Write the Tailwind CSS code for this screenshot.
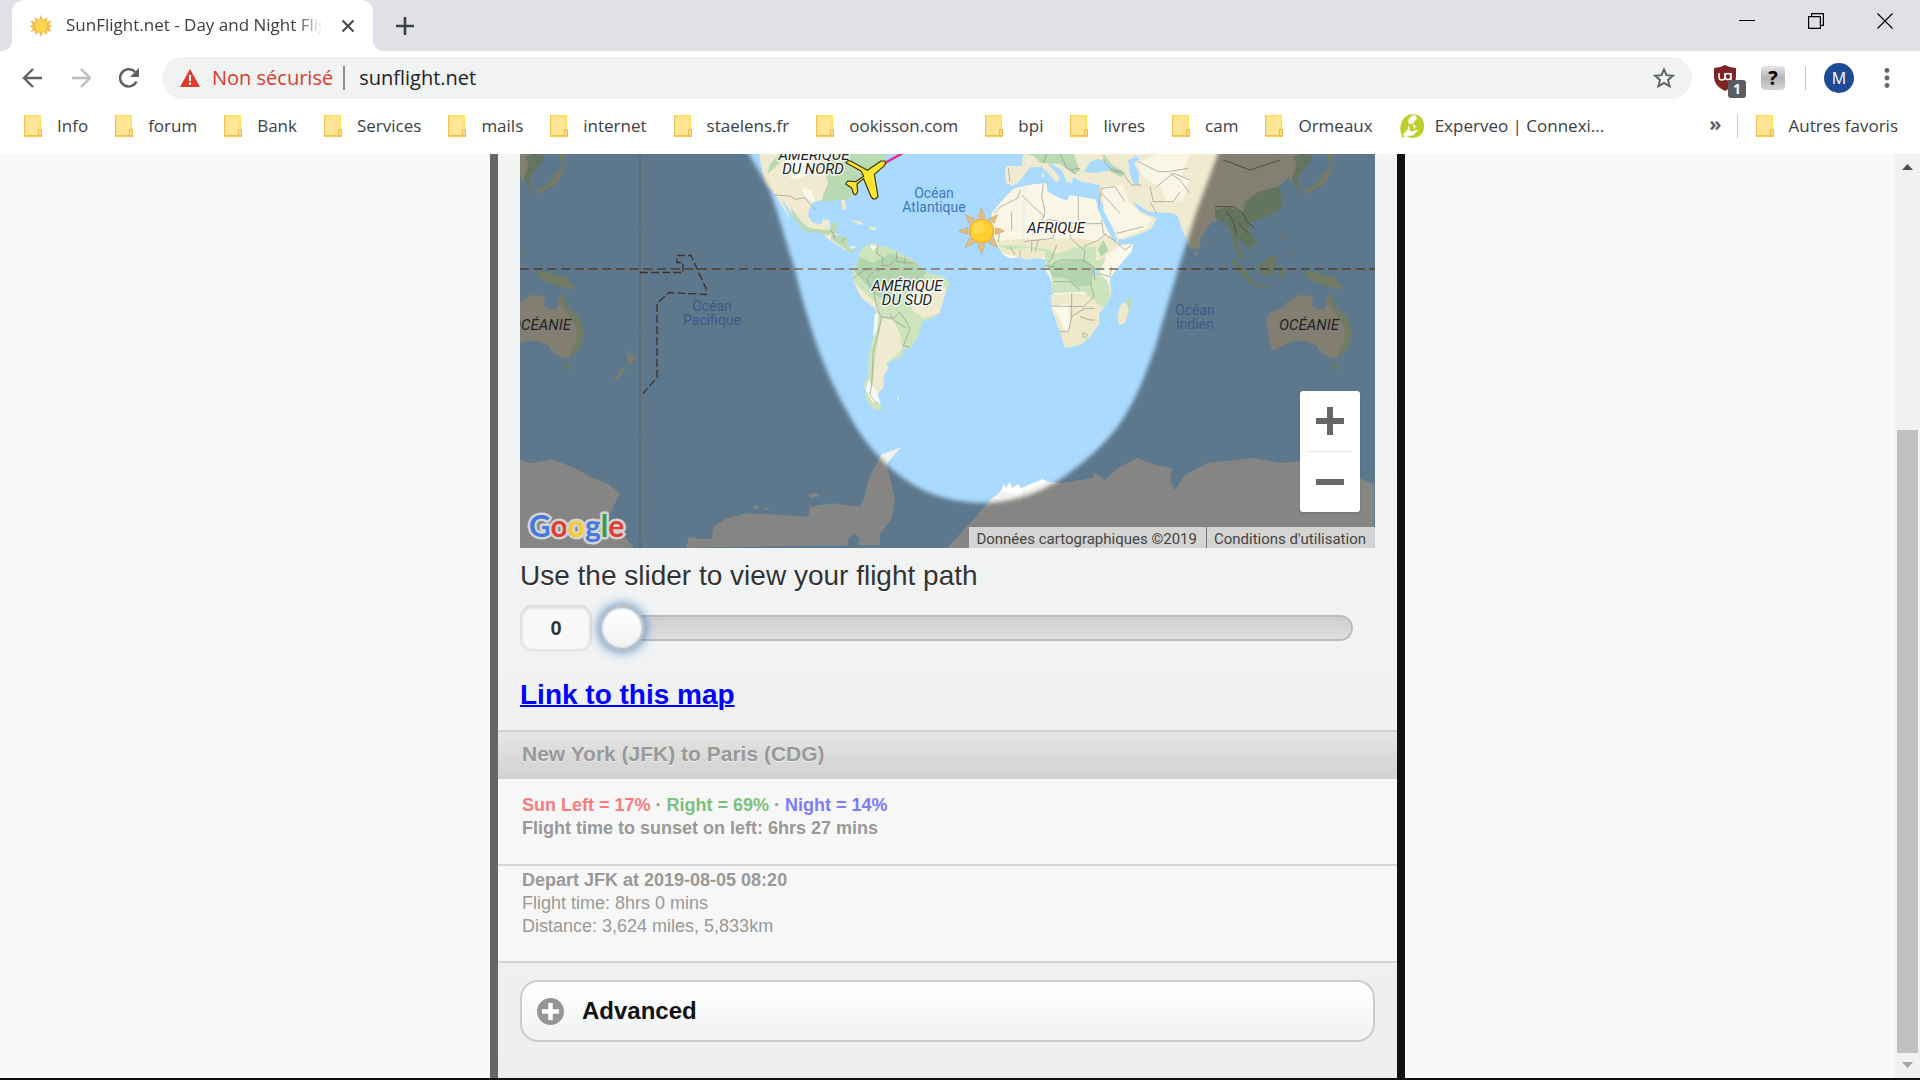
<!DOCTYPE html>
<html lang="fr">
<head>
<meta charset="utf-8">
<title>SunFlight.net - Day and Night Flight Map</title>
<script src="https://cdn.jsdelivr.net/npm/@tailwindcss/browser@4"></script>
</head>
<body class="flex h-screen flex-col overflow-hidden bg-white font-['Open_Sans',sans-serif] text-[#3c4043]">

<svg class="hidden" aria-hidden="true">
  <symbol id="folder" viewBox="0 0 18 22">
    <path d="M0 0h17v14h1v8H0z" fill="#ffdf5a"/>
    <path d="M1 1.500h14.500V20H1z" fill="#ffe596"/>
    <path d="M0 0h1.200v22H0z" fill="#f0c455"/>
    <path d="M0 20.800h18" stroke="#f3c04a" stroke-width="1.500"/>
    <path d="M14.700 21v-6.300h2.600V21z" fill="#ffe9a8" stroke="#e8b23c"/>
  </symbol>
</svg>

<!-- tab strip -->
<header class="flex h-[51px] shrink-0 items-end bg-[#dfe1e6]">
  <div class="h-2.5 w-3 bg-white"><div class="h-full w-full rounded-br-[10px] bg-[#dfe1e6]"></div></div>
  <div class="flex h-full w-[361px] items-center rounded-t-[12px] bg-white pr-[18px] pl-[17px]">
    <svg class="h-6 w-6 shrink-0" viewBox="-12 -12 24 24" fill="#f0bd4e">
      <path d="M0-11.500 2-6l4.500-3L5.500-4 11-5.500 8-1.500 11.500 0 8 2l2.500 4-5-1.500L6.500 9 2 6 0 11.500-2 6l-4.500 3 1-4.500L-10.500 6-8 2-11.500 0-8-1.500-11-5.500l5.500 1.500L-6.500-9-2-6z"/>
      <circle r="6" fill="#ffd84a"/>
    </svg>
    <span class="ml-[13px] w-[262px] overflow-hidden mask-r-from-88% mask-r-to-98% pb-0.5 text-[17px] leading-6 whitespace-nowrap">SunFlight.net - Day and Night Flight</span>
    <button class="ml-auto" aria-label="Fermer l'onglet"><svg class="h-3.5 w-3.5" viewBox="0 0 14 14" stroke="#4a4d51" stroke-width="2.200"><path d="M1.500 1.500l11 11M12.500 1.500l-11 11"/></svg></button>
  </div>
  <div class="h-2.5 w-3 bg-white"><div class="h-full w-full rounded-bl-[10px] bg-[#dfe1e6]"></div></div>
  <button class="ml-[11px] h-full" aria-label="Nouvel onglet"><svg class="h-[18px] w-[18px]" viewBox="0 0 18 18" stroke="#3c4043" stroke-width="2.600"><path d="M9 0v18M0 9h18"/></svg></button>
  <div class="mb-[22px] ml-auto flex gap-[53px] pr-[27px] text-black">
    <button aria-label="Réduire"><svg class="h-4 w-4" viewBox="0 0 16 16" stroke="currentColor"><path d="M0 7.500h16"/></svg></button>
    <button aria-label="Restaurer"><svg class="h-4 w-4" viewBox="0 0 16 16" fill="none" stroke="currentColor" stroke-width="1.200"><path d="M.6 3.600h11.800v11.800H.6zM3.600 3.600v-3h11.800v11.800h-3"/></svg></button>
    <button aria-label="Fermer"><svg class="h-4 w-4" viewBox="0 0 16 16" stroke="currentColor" stroke-width="1.200"><path d="M.5.5l15 15M15.500.5l-15 15"/></svg></button>
  </div>
</header>

<!-- toolbar -->
<div class="flex h-[54px] shrink-0 items-center pr-[30px] pl-[21px]">
  <button aria-label="Précédent"><svg class="h-6 w-6" viewBox="0 0 24 24" fill="none" stroke="#5f6368" stroke-width="2.400"><path d="M21 12H3M12 3l-9 9 9 9"/></svg></button>
  <button class="ml-6" aria-label="Suivant"><svg class="h-6 w-6" viewBox="0 0 24 24" fill="none" stroke="#babcbe" stroke-width="2.400"><path d="M3 12h18M12 3l9 9-9 9"/></svg></button>
  <button class="ml-6" aria-label="Actualiser"><svg class="h-6 w-6" viewBox="0 0 24 24"><path d="M19.500 15.500A8.600 8.600 0 1 1 18 6" fill="none" stroke="#5f6368" stroke-width="2.500"/><path d="M22 2v9h-9z" fill="#5f6368"/></svg></button>
  <div class="ml-[21px] flex h-[42px] flex-1 items-center rounded-full bg-[#f1f3f3] pr-[17px] pl-[18px]">
    <svg class="h-[18px] w-5" viewBox="0 0 20 18"><path d="M10 0l10 18H0z" fill="#db3c2e"/><path d="M10 6v6M10 13.500v2.200" stroke="#fff" stroke-width="2"/></svg>
    <span class="ml-3 text-xl leading-7 whitespace-nowrap text-[#d93a2b]">Non sécurisé</span>
    <span class="ml-2.5 h-6 w-0.5 bg-[#8b8d90]"></span>
    <input class="ml-3.5 min-w-0 flex-1 bg-transparent text-xl leading-7 text-[#202124] outline-none" type="text" aria-label="Adresse" value="sunflight.net">
    <button aria-label="Ajouter aux favoris"><svg class="h-[22px] w-[22px]" viewBox="0 0 24 24" fill="none" stroke="#5f6368" stroke-width="2.100"><path d="M12 2.500l2.700 6.400 7 .6-5.300 4.600 1.600 6.800-6-3.600-6 3.600 1.600-6.800L2.300 9.500l7-.6z"/></svg></button>
  </div>
  <button class="relative ml-[21px]" aria-label="uBlock Origin">
    <svg class="h-[26px] w-6" viewBox="0 0 24 26"><path d="M12 0q5 3 11 3v9q0 9-11 14Q1 21 1 12V3q6 0 11-3z" fill="#7e2426"/><path d="M6 8v4q0 3 3 3t3-3V8M12 12a3 3 0 1 0 3-3.500q-3 0-3 3.500M18 8v7" fill="none" stroke="#fff" stroke-width="1.500"/></svg>
    <span class="absolute top-[15px] left-[15px] flex h-[18px] w-[18px] items-center justify-center rounded-[3px] bg-[#5a5d60] text-sm leading-none font-bold text-white">1</span>
  </button>
  <button class="ml-6 flex h-6 w-6 items-center justify-center rounded-[4px] bg-linear-to-b from-[#e8e8e8] via-[#b5b5b5] to-[#d5d5d5] text-xl leading-none font-bold text-black" aria-label="Extension">?</button>
  <span class="ml-5 h-6 w-px bg-[#c8cacd]"></span>
  <button class="ml-[18px] flex h-[30px] w-[30px] items-center justify-center rounded-full bg-[#1d4b94] text-base leading-none text-white">M</button>
  <button class="ml-[30px]" aria-label="Menu"><svg class="h-5 w-[6px]" viewBox="0 0 6 20" fill="#5f6368"><circle cx="3" cy="2.500" r="2.400"/><circle cx="3" cy="10" r="2.400"/><circle cx="3" cy="17.500" r="2.400"/></svg></button>
</div>

<!-- bookmarks bar -->
<nav class="flex h-[49px] shrink-0 items-start gap-[27px] pt-[9px] pr-[22px] pl-6 text-[17px] leading-6 whitespace-nowrap">
  <a href="#" class="flex items-center gap-[15px]"><svg class="h-[22px] w-[18px]"><use href="#folder"/></svg>Info</a>
  <a href="#" class="flex items-center gap-[15px]"><svg class="h-[22px] w-[18px]"><use href="#folder"/></svg>forum</a>
  <a href="#" class="flex items-center gap-[15px]"><svg class="h-[22px] w-[18px]"><use href="#folder"/></svg>Bank</a>
  <a href="#" class="flex items-center gap-[15px]"><svg class="h-[22px] w-[18px]"><use href="#folder"/></svg>Services</a>
  <a href="#" class="flex items-center gap-[15px]"><svg class="h-[22px] w-[18px]"><use href="#folder"/></svg>mails</a>
  <a href="#" class="flex items-center gap-[15px]"><svg class="h-[22px] w-[18px]"><use href="#folder"/></svg>internet</a>
  <a href="#" class="flex items-center gap-[15px]"><svg class="h-[22px] w-[18px]"><use href="#folder"/></svg>staelens.fr</a>
  <a href="#" class="flex items-center gap-[15px]"><svg class="h-[22px] w-[18px]"><use href="#folder"/></svg>ookisson.com</a>
  <a href="#" class="flex items-center gap-[15px]"><svg class="h-[22px] w-[18px]"><use href="#folder"/></svg>bpi</a>
  <a href="#" class="flex items-center gap-[15px]"><svg class="h-[22px] w-[18px]"><use href="#folder"/></svg>livres</a>
  <a href="#" class="flex items-center gap-[15px]"><svg class="h-[22px] w-[18px]"><use href="#folder"/></svg>cam</a>
  <a href="#" class="flex items-center gap-[15px]"><svg class="h-[22px] w-[18px]"><use href="#folder"/></svg>Ormeaux</a>
  <a href="#" class="flex items-center gap-[11px]"><svg class="h-6 w-6" viewBox="0 0 24 24"><path d="M2 22q-3-6-1-12Q4 0 13 0q11 1 11 12T13 24q-4 0-7-2l-5 2z" fill="#bccf2c"/><path d="M15 1q-8 2-6 9l4-1 4-5M13 10q4 2 1 5M9 12q-2 2 1 4M3 21l5-6 3 3 7-2-5 5-6 1z" fill="#fff" stroke="#fff" stroke-width=".6"/><path d="M10 12l4 3" stroke="#bccf2c" stroke-width="1.500"/></svg>Experveo | Connexi...</a>
  <button class="ml-auto text-xl leading-5 font-bold text-[#5f6368]" aria-label="Autres">»</button>
  <div class="-ml-3 flex items-center gap-[18px]"><span class="h-6 w-px bg-[#c8cacd]"></span><a href="#" class="flex items-center gap-[15px]"><svg class="h-[22px] w-[18px]"><use href="#folder"/></svg>Autres favoris</a></div>
</nav>

<!-- web page -->
<div class="flex min-h-0 flex-1 bg-[#f9f9f9]">
  <main class="flex min-w-0 flex-1 justify-center overflow-hidden font-['Liberation_Sans',Arial,sans-serif]">
    <div class="w-full max-w-[915px] border-x-8 border-l-[#666] border-r-[#111] bg-linear-to-b from-[#f3f5f5] via-[#f1f3f3] to-[#eee]">
      <section class="px-[22px]">
        <div class="relative overflow-hidden">
          <svg class="block w-full" viewBox="0 0 855 394" role="img" aria-label="Carte du monde">
            <defs>
              <filter id="soft" x="-10%" y="-10%" width="120%" height="120%"><feGaussianBlur stdDeviation="2.200"/></filter>
              <g id="oceania">
                <g transform="translate(410 -4) scale(.33333)">
                  <path fill="#ece6cd" d="M1010 500l14-12 16-8 25-10 6-14 12-4 12-10 15-7 20 3 20-3-5 30 20 12 15 3 8-18 10-32 12 22 10 26 20 14 10 20 10 30-2 36-18 34-30 15-30-15-14-14-6-11-35-15-30 0-30 10-35 20-10-20-5-30-5-20z"/>
                  <path fill="#cfe0b5" d="M1198 430l12 24 10 16 30 30 15 40-5 40-15 30-25 10 25-55-5-40-35-50-15-20zM1212 640l18 5-8 20zM1125 362l35 8 50 10 35 40-45-10-40-10-30-20z"/>
                  <path fill="#c3dbae" d="M898 325l22 10 45 50-5 20-30-35zM965 398l50 8-5 6-45-6zM985 345l35-25 20-2-5 32-15 28-30-8zM1048 350l17 5-10 35-10-5zM1060 240l5 20-10 8-3-15zM1090 298l-3 18-12-4z"/>
                  <path fill="#d4e0ba" d="M1210 38l-5 26-20 36-35 20-30 17 5-17 40-25 15-25zM1190 12h28l-22 28z"/>
                  <path fill="#efe9d0" d="M795 302l10 4-4 14-8-5z"/>
                </g>
              </g>
              <g id="asia-east" transform="translate(410 -4) scale(.33333)">
                <path fill="#efe9cf" d="M755 0l-10 205 10 30 15 35 12 30 13-10 3-30 42-40 30-10 15 5 10 25 15 25 5 35 20 30 10 0-20-40-5-25 25 20 15 15 20-25-25-35 10-25 35-10 50-25 13-30-18-40 15-15 15-10 20 15 10 25 10-10-15-30 20-25 25-30 5-30z"/>
                <path fill="#b7d6ad" d="M845 180l50-10 45 20 5-35 40-30 60-15 18 40-13 30-50 25-35 10-10 25 25 35-20 25-40-35 5 25 20 40-10 0-20-30-5-35-25-50-25-5zM1090 20l60-20-5 30-45 55 15 30-10 10-20-40 15-40z"/>
                <path fill="none" stroke="#888" stroke-width="3" d="M790 135l60 35 60 0 30 20 10 25 25 20M880 30l80 30 90-30M890 185l20 30 10 40M925 220l30 30"/>
              </g>
            </defs>
            <rect width="855" height="394" fill="#aadaff"/>
            <use href="#asia-east"/><use href="#asia-east" x="-768"/>
            <use href="#oceania"/><use href="#oceania" x="-768"/>

            <!-- the Americas -->
            <g transform="translate(200 -4) scale(.33333)">
              <path fill="#f0ebd0" d="M118 0l2 30 5 20 8 45 12 18 15 12 12 20 18 30 17 28 2-5-20-38-4-12 15 20 14 22 16 23 20 20 15 5 30 6 15 6 10 14 30 20 30 18 12-3 18-9-6-4-14 4-6 6-14-8-6-5-5-28-35-12 8-6-3-26-20-3-5 15-25-5-15-20 5-25 10-15 10-5 30-5 20-5 20 2 5 8 3 25 10 3 2-18-10-25 20-25 20-35 30-20 40-35 30-30z"/>
              <path fill="#b9dab2" d="M330 12l-20 45 15 40-15 35-5 25 55-8 28 2 2-6 20-25 20-35 30-20 60-65zM178 12l-28 30-8 30 25-22 32-38z"/>
              <path fill="#b9dab2" d="M210 170l35 45 25 20 40 5 20-2 5-20 20 0-8 32-30 5-20-5-35-5-20-12-18-26zM335 252l45 10 5 28 20 14-12 4-30-20-30-20z"/>
              <path fill="#fbf8ec" d="M200 40l35-14 30 22-10 30-30 10-25-14zM250 110l25 15 12 32-20-5-20-25z"/>
              <path fill="#e4edcf" d="M388 210l30 3 16 10-14 1zM445 228l25 4-2 10-18-4z"/>
              <path fill="#cde4bd" d="M418 310l6-14 11-6 15-10 25 5 35 10 25 10 25 15 25 10 10 25 30 13 45 12 20 20-10 20-17 20-8 50-15 15-35 10-7 35-23 40-25 8-2 22-28 10-20 10 5 15-15 25 2 30-22 25 5 25 15 18-25 2-25-25-8-55 13-20v-60l15-60 5-90-40-25-25-45-2-30 17-40z"/>
              <path fill="#b3d5ae" d="M405 365l15-45 40 20 50-30 75 25 35 32-20 28-30 30-50 5-25 20-30-15-30-35z"/>
              <path fill="#f0ebd0" d="M565 430l30-30 60-10 25 30-22 70-48 14-34-24zM485 505l35 5 20 40 5 50-45 40 5 15-15 25 2 30-22 25-14-10 10-100zM400 390l20 25 45 40 20 40-20-20-40-30z"/>
              <path fill="#fafaf5" d="M450 285l20 2-12 16zM445 690l-8 30 20 35 25 8-10-35zM530 744l8-2-3 8zM465 490l10 2-4 50-12 20z"/>
              <path fill="none" stroke="#9b9b93" stroke-width="2.200" d="M165 135l45 3 15 10 30-5 20 25 15 14M330 240l10 10 5 18M375 262l-10 15M475 285l-5 25 20 15-5 22 25-2 15-15M530 305l0 30 50 5M555 320v20M400 385l25-20 30-10 25 10M440 390l20-25M440 390l20 30 10 50 15 35-25 100-5 100-5 30 15 20 10 5M485 500l35 5 20-18 20 30 10 20-20 50 20 5M510 490l10 20 40 25"/>
            </g>

            <!-- Europe, Africa and the Middle East -->
            <g transform="translate(410 -4) scale(.33333)">
              <path fill="#f0ebd0" d="M280 0l-5 48-47 0-3 20 3 30 20 10 17-10 18-23 17-23 35-2 20 20 25 28 10-13-15-20-20-20 5-5 35 20 15 35 15 5 5-20 25 15 55 10 0 45 15 20 30 45 20 55 60-20 30-15 15-30-25-10-25-10-22-30 17 10 30 20 75 5 25 15 15 30 15 35 12 30 13-10 3-30 42-60V0z"/>
              <path fill="#faf6e6" d="M520 110l60-5 15 50 45 40 25 10-15 30-90 35-40-80zM620 40l60-28h100l-30 80-60 20-50-30zM690 100l90-20-20 70-50 10z"/>
              <path fill="#b9dab2" d="M290 12l80 0 60 0 20 50-20 10-40-30-60-4-20-20zM520 12l30 35 35 20-10 15-60-30z"/>
              <path fill="#aadaff" d="M462 66l18-30 25-10 42 20-6 16-44 6zM595 30l25-12 10 10-18 12 15 30-2 35-15-2-10-30zM318 72l10 0-3 35-7-4zM373 96l15 0-4 8zM486 118l18-2-4 4z"/>
              <path fill="#f3eed5" d="M337 72l6-2 0 12-6 2z"/>
              <path fill="#faf6e6" d="M222 145l28-28 30-9 35-6 33-2 5 25 37 20 22 7 6-17 32 5 45 8 10 17 20 40 20 35 10 30 10 15 45-3-5 23-35 40-30 40 3 55-23 35-15 15 3 30-28 40-30 25-45 8-10-33-17-50-15-40 9-50-12-35-15-30 5-25-20-5-30-7-60 7-20-10-25-40-7-30-3-55z"/>
              <path fill="#efe9cc" d="M200 272l80-6 70 4 90-6 60 10 60-30 6 40-46 40-90 5-60-10-80 10-75-20zM360 435l80-5 80 10 20-50 3 50-23 35-15 15 3 30-28 40-30 25-45 8-10-33-17-50z"/>
              <path fill="#cbe4bd" d="M198 286l60 0 90 10 30 15 70-20 50 0 0 40 30-10-20 50 23 20 12 49-23 35-18-15-40-35-90 5-10-5 4-35-10-35-12-30 3-20-22-5-30-7-60 7-22-10z"/>
              <path fill="#b3d5ae" d="M400 335l70-5 25 25-10 50-45 5-30-25-40-5-22-35zM520 270l15 30-20 20-12-20z"/>
              <path fill="#fbf8ec" d="M370 470l45-10 5 60-10 30zM540 310l40-25 30-2-10 25-35 35z"/>
              <path fill="#efe9cc" d="M600 438l5 22-20 60-17 5-6-20 8-40 20-10z"/><path fill="#b9dab2" d="M600 438l5 22-8 22-9-27z"/>
              <path fill="#aadaff" d="M499 168l8-2 15 18 28 54 12 34-8 6-20-34zM488 360l14 2-2 10-10-2z"/>
              <path fill="none" stroke="#9b9b93" stroke-width="2.200" d="M245 185l0 55M272 120l-10 25-50 25-20 20M340 102l-5 35 10 50-10 30 20-8 85 12 75 0M445 140v72M275 135l35 35 35 30M515 210l5 40 30 20 35 30 20-15M210 235l-5 40M280 275l90-10 10-40M270 300l0 22M240 290l15 25M305 275v30M325 270l-10 35M380 285l-15 40-20 25M425 212l-5 50 20 20 25 20-5 30M460 290l45-20 25-20M370 340l25-10 60 0 35 20 5 40M347 350l25 0M370 395l50 0 30 25M425 430v70l-10 45-25 0M362 468l100 2 30-30-10-40M425 500l40-25 30 0M450 500l30 10 15 0M460 548l12 6-5 10-10-5zM505 170l10-55 40-5 30 45M515 130l55 60M560 250l80-20M545 350l-5 30-35-10M520 30l20 25 35 10 30 40 30 0M540 60l35 10M625 35l60 30 30 0 60-10M660 110l10 45 60 0 20-30M680 110l50-40 50 20M660 155l20 35M720 70l30 20 30 40M390 12l20 40 30 20M350 12l-10 28M420 60l30-5M235 55l5 40"/>
            </g>

            <!-- New Zealand and Antarctica -->
            <g transform="translate(-40 -4) scale(.33333)">
              <path fill="#e2e6c6" d="M440 600l15 15 15 5-12 15-12 12-4-20zM440 650l-25 38-15 4 22-35z"/>
              <path fill="#f2f2ee" d="M120 930l30 10 65-12 45 17 35 15 35 20 50 20 40 30-15 30-20 40-15 40 70 25 20 28H120zM620 1193l5-33 45 8 25-3 5-35 40-25 60-15 100 5 85 5 5-30 70-10 80 10 12-25 12-50 10-25 31-57 60-22-13 12-32 40 25 105-10 60-35 42 0 35zM820 1068l10-4 6 14-14-2zM850 1075l20 0-8 6zM980 1035l25-6 15 10-25 4zM1180 985l5 30-12 15 6-35z"/>
              <path fill="#aadaff" d="M1105 1165l20-15 15 20-10 23h-25zM1205 1193l15-20 30 20z"/>
            </g>
            <path fill="#f2f2ee" d="M427 394l26-28 17-20 10-8 3-6 2 4 4-6 2 6 6-4 3 4 22-9 20 2 30-5 3-5 10 7 13-12 19-10 18 7 17 3-2 12 5 10 10-15 23-12 44-5 30 5 17-2 30 5 30 12 15 6v64z"/>
            <path fill="#fff" d="M481 338l3-8 2 4 4-6 2 6 6-4 3 4 22-9 4 3-30 12z"/>

            <g fill="none">
              <path d="M0 115h855" stroke="#94887c" stroke-width="2" stroke-dasharray="9 4.700"/>
              <path d="M120 0v394" stroke="#a89c8c" stroke-dasharray="5 1.500"/>
              <path d="M504 0v394" stroke="#d9e0e6" stroke-opacity=".6"/>
              <path d="M120 118.500h43v-10h-6v-7h14l15 33v6l-37-2-12 11v74l-14 16" stroke="#6d5550" stroke-width="1.300" stroke-dasharray="8 3"/>
            </g>

            <path filter="url(#soft)" fill="#000" fill-opacity=".45" fill-rule="evenodd" d="M-60-60H915V454H-60zM208-60L229 0C240 20 244 24 250 37C262 70 266 90 273 109C280 138 286 158 294 183C303 210 314 235 328 259C338 278 350 294 362 306C375 319 388 329 407 338C425 345 445 349 463 349C485 349 506 343 523 335C535 329 542 325 549 319C570 304 587 287 599 271C613 250 621 232 628 213C635 196 639 181 644 163L658 116L677 56L698 0L716-60z"/>

            <g font-family="Roboto, sans-serif" font-size="14" text-anchor="middle">
              <g fill="#3f5887"><text x="192" y="157">Océan</text><text x="192" y="171">Pacifique</text></g>
              <g fill="#3f79b8"><text x="414" y="44">Océan</text><text x="414" y="58">Atlantique</text></g>
              <g fill="#3f5887"><text x="675" y="161">Océan</text><text x="675" y="175">Indien</text></g>
            </g>

            <g font-family="Roboto, sans-serif" font-size="15" font-style="italic" text-anchor="middle" fill="#202326">
              <g stroke="#fff" stroke-width="3" stroke-opacity=".75" stroke-linejoin="round" paint-order="stroke">
                <text x="294" y="6">AMÉRIQUE</text><text x="293" y="20">DU NORD</text>
                <text x="387" y="137">AMÉRIQUE</text><text x="387" y="151">DU SUD</text>
                <text x="536" y="79">AFRIQUE</text>
              </g>
              <text x="789" y="176">OCÉANIE</text><text x="21" y="176">OCÉANIE</text>
            </g>

            <path d="M365 9l18-10" stroke="#ee2a86" stroke-width="2.500"/>
            <path transform="translate(200 -4) scale(.33333)" fill="#ffe52e" stroke="#3b3412" stroke-width="3.500" stroke-linejoin="round" d="M378 38l6-6 8 1 50 28 41-28 12 0 2 8-6 8-28 24 11 66-5 7-10 1-6-7-22-54-20 16 2 24-6 8-6-2-6-18-18-12 6-9 24 2 24-16-8-16z"/>
            <g transform="translate(461.500 77)">
              <g fill="#e6bd7c" stroke="#c9a468" stroke-width=".6">
                <path id="ray" d="M-3.500-14L0-23l3.500 9z"/>
                <use href="#ray" transform="rotate(45)"/><use href="#ray" transform="rotate(90)"/><use href="#ray" transform="rotate(135)"/><use href="#ray" transform="rotate(180)"/><use href="#ray" transform="rotate(225)"/><use href="#ray" transform="rotate(270)"/><use href="#ray" transform="rotate(315)"/>
              </g>
              <circle r="12" fill="#ffcf2f" stroke="#f0ab3c" stroke-width="1.500"/><circle cx="-3" cy="-3" r="6" fill="#ffe05c" opacity=".7"/>
            </g>

            <text x="9" y="383" font-family="Lato, sans-serif" font-size="30" font-weight="700" stroke="#d2d4d4" stroke-width="5" stroke-linejoin="round" paint-order="stroke"><tspan fill="#4579e0">G</tspan><tspan fill="#e23e31">o</tspan><tspan fill="#fbcb2a">o</tspan><tspan fill="#4579e0">g</tspan><tspan fill="#3a9a50">l</tspan><tspan fill="#e23e31">e</tspan></text>
          </svg>

          <div class="absolute right-[15px] bottom-9 flex h-[121px] w-[60px] flex-col rounded-[3px] bg-white px-2 shadow-sm">
            <button class="flex flex-1 items-center justify-center border-b border-[#e6e6e6]" aria-label="Zoom avant"><svg class="h-7 w-7" viewBox="0 0 28 28" fill="#666"><path d="M11 0h6v11h11v6H17v11h-6V17H0v-6h11z"/></svg></button>
            <button class="flex flex-1 items-center justify-center" aria-label="Zoom arrière"><svg class="h-7 w-7" viewBox="0 0 28 28" fill="#666"><path d="M0 11h28v6H0z"/></svg></button>
          </div>
          <div class="absolute right-0 bottom-0 flex h-[21px] bg-[#f5f5f5]/70 font-[Roboto,sans-serif] text-[15px] leading-6 whitespace-nowrap text-[#444]">
            <span class="pr-[9px] pl-[7px]">Données cartographiques ©2019</span>
            <a href="#" class="border-l border-[#777] pr-[9px] pl-[7px]">Conditions d'utilisation</a>
          </div>
        </div>

        <label for="progress" class="block text-[28px] leading-[56px] text-[#333] text-shadow-[0_1px_0_#fff]">Use the slider to view your flight path</label>
        <div class="mt-px flex h-[46px] items-center">
          <input id="minutes" aria-label="Minutes" type="text" value="0" class="h-[46px] w-[72px] rounded-[12px] border border-[#ddd] bg-[#f9f9f9] text-center text-xl font-bold text-[#333] shadow-[inset_0_1px_4px_rgba(0,0,0,0.2)] outline-none">
          <input id="progress" type="range" min="0" max="480" value="0" class="mr-[22px] ml-[7px] h-[46px] min-w-0 flex-1 appearance-none bg-transparent outline-none [&::-webkit-slider-runnable-track]:h-[26px] [&::-webkit-slider-runnable-track]:rounded-full [&::-webkit-slider-runnable-track]:border-2 [&::-webkit-slider-runnable-track]:border-[#bbb] [&::-webkit-slider-runnable-track]:bg-linear-to-b [&::-webkit-slider-runnable-track]:from-[#cfcfcf] [&::-webkit-slider-runnable-track]:to-[#dfdfdf] [&::-webkit-slider-thumb]:-mt-3 [&::-webkit-slider-thumb]:-ml-0.5 [&::-webkit-slider-thumb]:h-[46px] [&::-webkit-slider-thumb]:w-[46px] [&::-webkit-slider-thumb]:appearance-none [&::-webkit-slider-thumb]:rounded-full [&::-webkit-slider-thumb]:border-2 [&::-webkit-slider-thumb]:border-[#bbb] [&::-webkit-slider-thumb]:bg-linear-to-b [&::-webkit-slider-thumb]:from-white [&::-webkit-slider-thumb]:to-[#f1f1f1] [&::-webkit-slider-thumb]:shadow-[inset_0_0_3px_#387bbe,0_0_12px_#387bbe]">
        </div>
        <a href="#" class="mt-[26px] mb-[17px] inline-block align-top text-[28px] leading-9 font-bold text-[#0000ff] underline decoration-2">Link to this map</a>
      </section>

      <section class="text-lg leading-[23px] text-[#999]">
        <h2 class="border-t-2 border-[#d0d0d0] bg-linear-to-b from-[#e5e5e3] to-[#d1d1d1] px-6 pt-2 pb-[11px] text-[21px] leading-7 font-bold text-[#999] text-shadow-[0_1px_0_#eee]">New York (JFK) to Paris (CDG)</h2>
        <div class="border-b-2 border-[#d6d6d6] bg-[#f7f7f7] px-6 pt-[15px] pb-6 font-bold">
          <p><span class="text-[#f87c7c]">Sun Left = 17%</span> · <span class="text-[#7dbf7d]">Right = 69%</span> · <span class="text-[#7c7cf8]">Night = 14%</span></p>
          <p>Flight time to sunset on left: 6hrs 27 mins</p>
        </div>
        <div class="border-b-2 border-[#d6d6d6] bg-[#f7f7f7] px-6 pt-[3px] pb-[23px]">
          <p class="font-bold">Depart JFK at 2019-08-05 08:20</p>
          <p>Flight time: 8hrs 0 mins</p>
          <p>Distance: 3,624 miles, 5,833km</p>
        </div>
      </section>

      <div class="px-[22px] pt-[17px] pb-10">
        <button class="flex h-[62px] w-full items-center gap-[18px] rounded-[18px] border-2 border-[#ccc] bg-linear-to-b from-white to-[#f0f2f2] px-[15px] text-2xl font-bold text-[#111]">
          <svg class="h-[27px] w-[27px]" viewBox="0 0 27 27"><circle cx="13.500" cy="13.500" r="13.500" fill="#959595"/><path d="M13.500 5v17M5 13.500h17" stroke="#fff" stroke-width="4.500"/></svg>
          Advanced
        </button>
      </div>
    </div>
  </main>

  <!-- page scrollbar -->
  <div class="flex w-[25px] shrink-0 flex-col items-center bg-[#f1f1f1]" aria-hidden="true">
    <svg class="mt-2.5 h-1.5 w-[11px]" viewBox="0 0 11 6" fill="#505050"><path d="M5.500 0L11 6H0z"/></svg>
    <div class="mt-auto h-[623px] w-[21px] bg-[#c1c1c1]"></div>
    <svg class="mt-[9px] mb-2.5 h-1.5 w-[11px]" viewBox="0 0 11 6" fill="#a3a3a3"><path d="M0 0h11L5.500 6z"/></svg>
  </div>
</div>
<footer class="h-0.5 shrink-0 bg-[#101010]"></footer>
</body>
</html>
